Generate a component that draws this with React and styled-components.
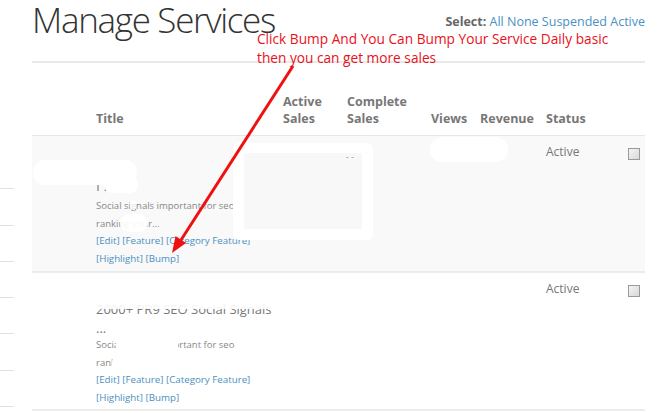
import React from "react";
import styled, { createGlobalStyle } from "styled-components";

const Global = createGlobalStyle`
  html, body { margin: 0; padding: 0; background: #fff; }
  body { font-family: "Open Sans", "Noto Sans", sans-serif; color: #555; width: 671px; height: 413px; overflow: hidden; }
  * { box-sizing: border-box; }
`;

const Page = styled.div`
  position: relative;
  display: flex;
  width: 671px;
  height: 413px;
`;

const Sidebar = styled.ul`
  list-style: none;
  margin: 153px 0 0 0;
  padding: 0;
  width: 14px;
  flex: none;
`;

const SideItem = styled.li`
  height: 36.3px;
  border-bottom: 1px solid #e2e2e2;
`;

const Main = styled.main`
  margin-left: 18px;
  width: 613px;
  flex: none;
`;

const TitleBar = styled.header`
  display: flex;
  justify-content: space-between;
  align-items: flex-start;
  height: 63px;
  border-bottom: 2px solid #e9e9e9;
`;

const H1 = styled.h1`
  margin: 0;
  font-size: 35px;
  line-height: 40px;
  font-weight: 300;
  color: #333;
  letter-spacing: -1.3px;
`;

const SelectBar = styled.div`
  padding-top: 14px;
  font-size: 12.5px;
  line-height: 16px;
  color: #666;
  white-space: nowrap;
`;

const SelectLabel = styled.b`
  font-weight: 700;
  color: #666;
`;

const Link = styled.a`
  color: #4a90c2;
  text-decoration: none;
`;

const COLS = "56px 187px 64px 84px 49px 66px 78px 29px";

const HeaderRow = styled.div`
  display: grid;
  grid-template-columns: ${COLS};
  align-items: end;
  height: 73px;
  padding-bottom: 8px;
  border-bottom: 1px solid #e6e6e6;
`;

const Th = styled.div`
  padding-left: 8px;
  font-size: 12.5px;
  line-height: 17px;
  font-weight: 700;
  color: #777;
`;

const Row = styled.div`
  position: relative;
  display: grid;
  grid-template-columns: ${COLS};
  align-items: start;
  height: ${(p) => p.$h}px;
  background: ${(p) => (p.$shade ? "#f9f9f9" : "#fff")};
  border-bottom: 2px solid #ececec;
`;

const Cell = styled.div`
  padding-left: 8px;
  padding-top: ${(p) => p.$pt || 0}px;
`;

const TitleText = styled.div`
  font-size: 13px;
  line-height: 19px;
  color: #777;
  max-width: 178px;
  margin-top: ${(p) => p.$mt || 0}px;
  margin-bottom: ${(p) => p.$mb || 0}px;
`;

const Desc = styled.div`
  margin-top: 1px;
  font-size: 9.5px;
  line-height: 18px;
  color: #888;
  white-space: nowrap;
`;

const Actions = styled.div`
  font-size: 9.75px;
  line-height: 18px;
  white-space: nowrap;
  margin-top: -1px;
`;

const Status = styled.div`
  font-size: 12px;
  line-height: 18px;
  color: #777;
`;

const Check = styled.span`
  display: block;
  margin: 5px 0 0 4px;
  width: 12px;
  height: 12px;
  border: 1px solid #9a9a9a;
  background: linear-gradient(135deg, #f4f4f4 0%, #d8d8d8 100%);
`;

const Blob = styled.div`
  position: absolute;
  left: ${(p) => p.$x}px;
  top: ${(p) => p.$y}px;
  width: ${(p) => p.$w}px;
  height: ${(p) => p.$h}px;
  border-radius: ${(p) => p.$r ?? 10}px;
  background: #fff;
  opacity: ${(p) => p.$o ?? 1};
`;

const Frame = styled.div`
  position: absolute;
  left: 201px;
  top: 7px;
  width: 140px;
  height: 97px;
  border-radius: 6px;
  background: #fff;
  padding: 10px 11px;
`;

const FrameInner = styled.div`
  width: 100%;
  height: 76px;
  background: #f8f8f8;
  font-size: 9px;
  line-height: 8px;
  color: #999;
  text-align: right;
  padding-right: 8px;
`;

const Note = styled.div`
  position: absolute;
  left: 257px;
  top: 29px;
  font-family: "Open Sans", "Noto Sans", sans-serif;
  font-size: 13.7px;
  line-height: 19px;
  color: #e8111a;
  white-space: nowrap;
  pointer-events: none;
`;

const ArrowSvg = styled.svg`
  position: absolute;
  left: 0;
  top: 0;
  pointer-events: none;
`;

function Actions2() {
  return (
    <Actions>
      <Link>[Edit]</Link> <Link>[Feature]</Link> <Link>[Category Feature]</Link>
      <br />
      <Link>[Highlight]</Link> <Link>[Bump]</Link>
    </Actions>
  );
}

export default function App() {
  return (
    <>
      <Global />
      <Page>
        <Sidebar>
          {Array.from({ length: 7 }).map((_, i) => (
            <SideItem key={i} />
          ))}
        </Sidebar>
        <Main>
          <TitleBar>
            <H1>Manage Services</H1>
            <SelectBar>
              <SelectLabel>Select:</SelectLabel> <Link>All</Link> <Link>None</Link>{" "}
              <Link>Suspended</Link> <Link>Active</Link>
            </SelectBar>
          </TitleBar>

          <HeaderRow>
            <Th />
            <Th>Title</Th>
            <Th>
              Active
              <br />
              Sales
            </Th>
            <Th>
              Complete
              <br />
              Sales
            </Th>
            <Th>Views</Th>
            <Th>Revenue</Th>
            <Th>Status</Th>
            <Th />
          </HeaderRow>

          <Row $shade $h={137}>
            <Cell />
            <Cell $pt={21.5}>
              <TitleText>
                Buy
                <br />f ...
              </TitleText>
              <Desc>
                Social signals important for seo
                <br />
                ranking your...
              </Desc>
              <Actions2 />
            </Cell>
            <Cell />
            <Cell />
            <Cell />
            <Cell />
            <Cell $pt={7}>
              <Status>Active</Status>
            </Cell>
            <Cell $pt={7}>
              <Check />
            </Cell>
            <Blob $x={1} $y={24} $w={104} $h={25} $r={12} />
            <Blob $x={72} $y={40} $w={34} $h={17} $r={8} />
            <Blob $x={88} $y={78} $w={28} $h={18} $r={9} $o={0.92} />
            <Blob $x={98} $y={64} $w={6} $h={10} $r={3} $o={0.8} />
            <Frame>
              <FrameInner>- -</FrameInner>
            </Frame>
            <Blob $x={398} $y={1} $w={78} $h={25} $r={12} />
          </Row>

          <Row $h={138}>
            <Cell />
            <Cell $pt={21.5}>
              <TitleText $mt={5} $mb={-3}>2000+ PR9 SEO Social Signals ...</TitleText>
              <Desc>
                Social signals important for seo
                <br />
                ranking your...
              </Desc>
              <Actions2 />
            </Cell>
            <Cell />
            <Cell />
            <Cell />
            <Cell />
            <Cell $pt={7}>
              <Status>Active</Status>
            </Cell>
            <Cell $pt={7}>
              <Check />
            </Cell>
            <Blob $x={58} $y={28} $w={205} $h={8} $r={2} $o={0.9} />
            <Blob $x={84} $y={65} $w={62} $h={16} $r={6} />
            <Blob $x={80} $y={83} $w={66} $h={16} $r={6} />
          </Row>
        </Main>

        <Note>
          Click Bump And You Can Bump Your Service Daily basic
          <br />
          then you can get more sales
        </Note>
        <ArrowSvg width="671" height="413" viewBox="0 0 671 413">
          <line x1="293" y1="66" x2="181" y2="240" stroke="#ee1111" strokeWidth="3" />
          <polygon points="172,253 175.5,236 186,243" fill="#ee1111" />
        </ArrowSvg>
      </Page>
    </>
  );
}
